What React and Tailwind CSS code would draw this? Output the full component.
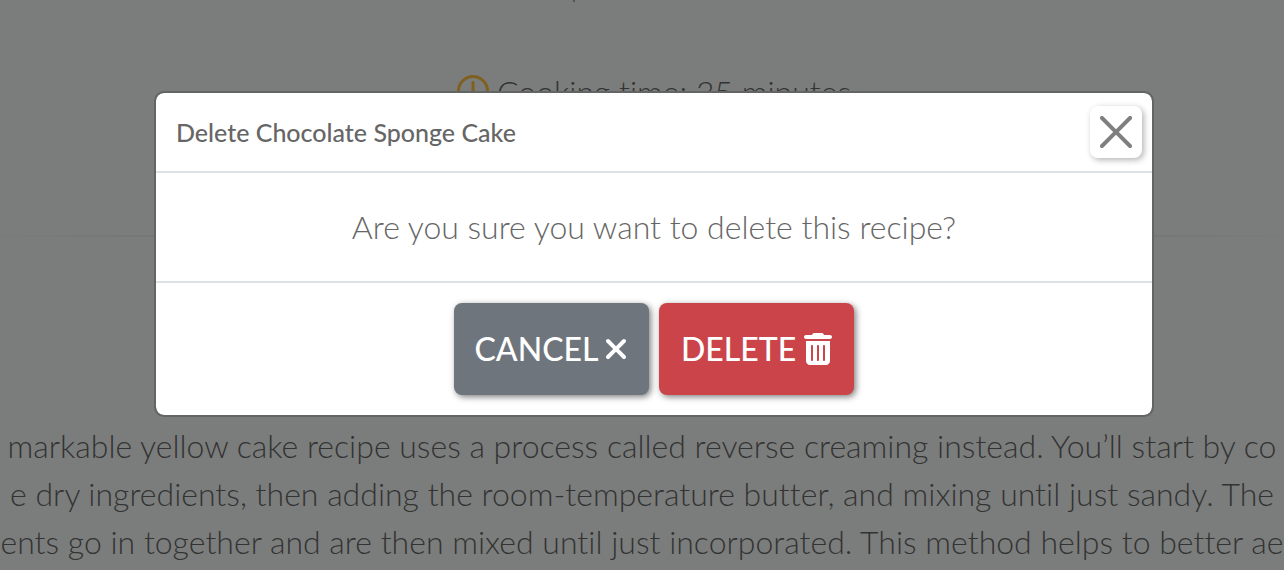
import { FaRegClock, FaTrashCan, FaXmark } from "react-icons/fa6";

const method = [
  "markable yellow cake recipe uses a process called reverse creaming instead. You’ll start by co",
  "e dry ingredients, then adding the room-temperature butter, and mixing until just sandy. The",
  "ents go in together and are then mixed until just incorporated. This method helps to better ae",
];

function RecipePage() {
  return (
    <main className="overflow-hidden text-[32px] leading-[48px] font-light text-[#333333]">
      <div className="flex justify-center pr-[136px]">
        <span className="h-0.5 w-0.5 bg-[#555656]" />
      </div>
      <p className="mt-[66px] flex items-center justify-center gap-2 pl-6">
        <FaRegClock className="mt-[-2px] text-[#80601f]" aria-hidden="true" />
        Cooking time: 35 minutes
      </p>
      <hr className="mt-[119px] h-0.5 border-0 bg-linear-to-r from-[#7a7c7b] via-[#646665] to-[#7a7c7b]" />
      <div className="mt-[185px]">
        {method.map((line) => (
          <p key={line} className="flex justify-center whitespace-nowrap">
            {line}
          </p>
        ))}
      </div>
    </main>
  );
}

function DeleteDialog() {
  return (
    <div className="absolute inset-0 flex items-start justify-center pt-[91px] pl-6">
      <section
        role="dialog"
        aria-modal="true"
        aria-labelledby="dialog-title"
        className="w-full max-w-[1000px] rounded-[10px] border-2 border-[#636564] bg-white bg-clip-padding text-[#666666]"
      >
        <header className="flex items-center justify-between border-b-2 border-[#dee2e6] py-[13px] pr-2.5 pl-5">
          <h1 id="dialog-title" className="text-[25px] leading-8 font-medium">
            Delete Chocolate Sponge Cake
          </h1>
          <button
            type="button"
            aria-label="Close"
            className="flex size-[52px] items-center justify-center rounded-lg bg-white text-[#7f7f7f] shadow-[2px_2px_6px_rgba(0,0,0,0.3)]"
          >
            <svg viewBox="0 0 16 16" className="size-8" fill="currentColor" aria-hidden="true">
              <path d="M.293.293a1 1 0 011.414 0L8 6.586 14.293.293a1 1 0 111.414 1.414L9.414 8l6.293 6.293a1 1 0 01-1.414 1.414L8 9.414l-6.293 6.293a1 1 0 01-1.414-1.414L6.586 8 .293 1.707a1 1 0 010-1.414z" />
            </svg>
          </button>
        </header>
        <p className="py-[30px] text-center text-[32px] leading-[48px] font-light">
          Are you sure you want to delete this recipe?
        </p>
        <footer className="flex justify-center gap-2.5 border-t-2 border-[#dee2e6] py-5 text-[32px] leading-[48px] font-medium text-white">
          <button
            type="button"
            className="flex h-[92px] w-[195px] items-center justify-center gap-1.5 rounded-lg bg-[#6e757c] shadow-[2px_2px_6px_rgba(0,0,0,0.5)]"
          >
            CANCEL
            <FaXmark className="h-8 w-6" aria-hidden="true" />
          </button>
          <button
            type="button"
            className="flex h-[92px] w-[195px] items-center justify-center gap-2 rounded-lg bg-[#cb444a] shadow-[2px_2px_6px_rgba(0,0,0,0.5)]"
          >
            DELETE
            <FaTrashCan className="h-8 w-7" aria-hidden="true" />
          </button>
        </footer>
      </section>
    </div>
  );
}

export default function App() {
  return (
    <div className="relative min-h-screen overflow-hidden bg-[#7b7d7c] font-['Lato',sans-serif] [font-variant-ligatures:none]">
      <RecipePage />
      <DeleteDialog />
    </div>
  );
}
